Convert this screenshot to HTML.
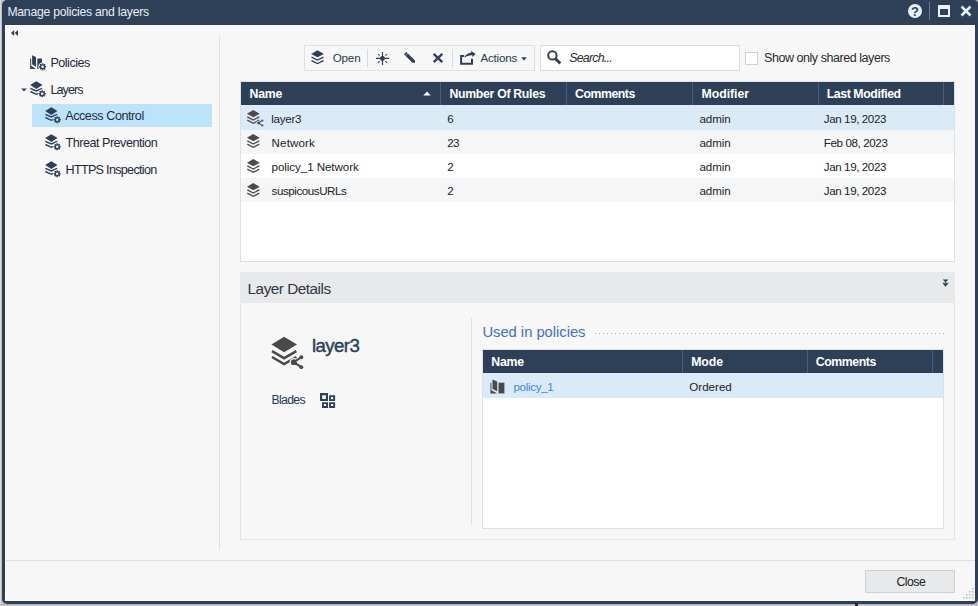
<!DOCTYPE html>
<html lang="en"><head><meta charset="utf-8"><title>Manage policies and layers</title>
<style>
html,body{margin:0;padding:0}
body{width:978px;height:606px;overflow:hidden;background:#c9c9c9;position:relative;font-family:"Liberation Sans", sans-serif}
.a{position:absolute}
.t{position:absolute;white-space:pre;line-height:1}
</style></head><body>
<div class="a" style="left:0;top:0;width:1px;height:606px;background:#dcdcdc"></div>
<div class="a" style="left:1px;top:0;width:1px;height:606px;background:#bfbcbb"></div>
<div class="a" style="left:0;top:604px;width:978px;height:1px;background:#b6b3b1"></div>
<div class="a" style="left:2px;top:0;width:976px;height:604px;background:#2e3f58;border-radius:5px 4px 5px 5px"></div>
<div class="a" style="left:5px;top:25px;width:970px;height:576px;background:#ffffff"></div>
<div class="a" style="left:6px;top:26px;width:969px;height:574px;background:#f7f7f7"></div>
<div class="a" style="left:855px;top:603px;width:3px;height:3px;background:#1e2a3b"></div>
<svg class="a" style="left:900px;top:0" width="78" height="25" viewBox="0 0 78 25"><circle cx="15" cy="11" r="7" fill="#e8f0fb"/><text x="15" y="15.7" text-anchor="middle" font-family='"Liberation Sans", sans-serif' font-size="13" font-weight="700" fill="#2e3f58">?</text><rect x="29" y="2" width="1" height="18" fill="#6f7b8c"/><path d="M38 5 H50 V17 H38 Z M40 9 H48 V15 H40 Z" fill="#e8f0fb" fill-rule="evenodd"/><path d="M61.5 6.5 L70.5 15.5 M70.5 6.5 L61.5 15.5" stroke="#e8f0fb" stroke-width="2.5" fill="none"/></svg>
<svg class="a" style="left:9.8px;top:29.4px" width="10" height="8" viewBox="0 0 10 8"><path d="M1 4 L4.2 1 V7 Z M4.8 4 L8 1 V7 Z" fill="#2e3f58"/></svg>
<div class="a" style="left:32px;top:104px;width:180px;height:22.7px;background:#bde3fb"></div>
<svg style="position:absolute;left:29.8px;top:54.6px" width="17" height="16" viewBox="0 0 17 16"><path d="M0.15 3.5 L1.15 3.5 L1.15 10.8 L5.3 13.4 L5.3 14.0 L0.15 14.0 Z" fill="#2e3f58"/><path d="M2.1 0.3 L6.0 2.1 L6.0 11.8 L2.1 9.35 Z" fill="#2e3f58"/><path d="M7.3 3.5 L12.0 3.5 L12.0 14.0 L7.3 14.0 Z" fill="#2e3f58"/><circle cx="12.6" cy="11.8" r="4.30" fill="#f7f7f7"/><line x1="14.38" y1="11.80" x2="16.15" y2="11.80" stroke="#2e3f58" stroke-width="1.42"/><line x1="13.86" y1="13.06" x2="15.11" y2="14.31" stroke="#2e3f58" stroke-width="1.42"/><line x1="12.60" y1="13.58" x2="12.60" y2="15.35" stroke="#2e3f58" stroke-width="1.42"/><line x1="11.34" y1="13.06" x2="10.09" y2="14.31" stroke="#2e3f58" stroke-width="1.42"/><line x1="10.82" y1="11.80" x2="9.05" y2="11.80" stroke="#2e3f58" stroke-width="1.42"/><line x1="11.34" y1="10.54" x2="10.09" y2="9.29" stroke="#2e3f58" stroke-width="1.42"/><line x1="12.60" y1="10.03" x2="12.60" y2="8.25" stroke="#2e3f58" stroke-width="1.42"/><line x1="13.86" y1="10.54" x2="15.11" y2="9.29" stroke="#2e3f58" stroke-width="1.42"/><circle cx="12.6" cy="11.8" r="2.66" fill="#2e3f58"/><circle cx="12.6" cy="11.8" r="1.28" fill="#f7f7f7"/></svg>
<svg class="a" style="left:20.5px;top:87.5px" width="6" height="4" viewBox="0 0 6 4"><path d="M0.2 0.4 H5.8 L3 3.6 Z" fill="#2e3f58"/></svg>
<svg style="position:absolute;left:30.2px;top:80.6px" width="17" height="17" viewBox="0 0 17 17"><path d="M6.3 0.3 L12.5 4.1 L6.3 8.1 L0.2 4.1 Z" fill="#2e3f58"/><path d="M0.4 7.3 L6.3 10.0 L12.2 7.3" fill="none" stroke="#2e3f58" stroke-width="1.4"/><path d="M0.4 10.5 L6.3 13.3 L12.2 10.5" fill="none" stroke="#2e3f58" stroke-width="1.4"/><circle cx="12.2" cy="12.8" r="4.30" fill="#f7f7f7"/><line x1="13.97" y1="12.80" x2="15.75" y2="12.80" stroke="#2e3f58" stroke-width="1.42"/><line x1="13.46" y1="14.06" x2="14.71" y2="15.31" stroke="#2e3f58" stroke-width="1.42"/><line x1="12.20" y1="14.58" x2="12.20" y2="16.35" stroke="#2e3f58" stroke-width="1.42"/><line x1="10.94" y1="14.06" x2="9.69" y2="15.31" stroke="#2e3f58" stroke-width="1.42"/><line x1="10.42" y1="12.80" x2="8.65" y2="12.80" stroke="#2e3f58" stroke-width="1.42"/><line x1="10.94" y1="11.54" x2="9.69" y2="10.29" stroke="#2e3f58" stroke-width="1.42"/><line x1="12.20" y1="11.03" x2="12.20" y2="9.25" stroke="#2e3f58" stroke-width="1.42"/><line x1="13.46" y1="11.54" x2="14.71" y2="10.29" stroke="#2e3f58" stroke-width="1.42"/><circle cx="12.2" cy="12.8" r="2.66" fill="#2e3f58"/><circle cx="12.2" cy="12.8" r="1.28" fill="#f7f7f7"/></svg>
<svg style="position:absolute;left:45.2px;top:106.6px" width="17" height="17" viewBox="0 0 17 17"><path d="M6.3 0.3 L12.5 4.1 L6.3 8.1 L0.2 4.1 Z" fill="#2e3f58"/><path d="M0.4 7.3 L6.3 10.0 L12.2 7.3" fill="none" stroke="#2e3f58" stroke-width="1.4"/><path d="M0.4 10.5 L6.3 13.3 L12.2 10.5" fill="none" stroke="#2e3f58" stroke-width="1.4"/><circle cx="12.2" cy="12.8" r="4.30" fill="#bde3fb"/><line x1="13.97" y1="12.80" x2="15.75" y2="12.80" stroke="#2e3f58" stroke-width="1.42"/><line x1="13.46" y1="14.06" x2="14.71" y2="15.31" stroke="#2e3f58" stroke-width="1.42"/><line x1="12.20" y1="14.58" x2="12.20" y2="16.35" stroke="#2e3f58" stroke-width="1.42"/><line x1="10.94" y1="14.06" x2="9.69" y2="15.31" stroke="#2e3f58" stroke-width="1.42"/><line x1="10.42" y1="12.80" x2="8.65" y2="12.80" stroke="#2e3f58" stroke-width="1.42"/><line x1="10.94" y1="11.54" x2="9.69" y2="10.29" stroke="#2e3f58" stroke-width="1.42"/><line x1="12.20" y1="11.03" x2="12.20" y2="9.25" stroke="#2e3f58" stroke-width="1.42"/><line x1="13.46" y1="11.54" x2="14.71" y2="10.29" stroke="#2e3f58" stroke-width="1.42"/><circle cx="12.2" cy="12.8" r="2.66" fill="#2e3f58"/><circle cx="12.2" cy="12.8" r="1.28" fill="#bde3fb"/></svg>
<svg style="position:absolute;left:45.2px;top:133.6px" width="17" height="17" viewBox="0 0 17 17"><path d="M6.3 0.3 L12.5 4.1 L6.3 8.1 L0.2 4.1 Z" fill="#2e3f58"/><path d="M0.4 7.3 L6.3 10.0 L12.2 7.3" fill="none" stroke="#2e3f58" stroke-width="1.4"/><path d="M0.4 10.5 L6.3 13.3 L12.2 10.5" fill="none" stroke="#2e3f58" stroke-width="1.4"/><circle cx="12.2" cy="12.8" r="4.30" fill="#f7f7f7"/><line x1="13.97" y1="12.80" x2="15.75" y2="12.80" stroke="#2e3f58" stroke-width="1.42"/><line x1="13.46" y1="14.06" x2="14.71" y2="15.31" stroke="#2e3f58" stroke-width="1.42"/><line x1="12.20" y1="14.58" x2="12.20" y2="16.35" stroke="#2e3f58" stroke-width="1.42"/><line x1="10.94" y1="14.06" x2="9.69" y2="15.31" stroke="#2e3f58" stroke-width="1.42"/><line x1="10.42" y1="12.80" x2="8.65" y2="12.80" stroke="#2e3f58" stroke-width="1.42"/><line x1="10.94" y1="11.54" x2="9.69" y2="10.29" stroke="#2e3f58" stroke-width="1.42"/><line x1="12.20" y1="11.03" x2="12.20" y2="9.25" stroke="#2e3f58" stroke-width="1.42"/><line x1="13.46" y1="11.54" x2="14.71" y2="10.29" stroke="#2e3f58" stroke-width="1.42"/><circle cx="12.2" cy="12.8" r="2.66" fill="#2e3f58"/><circle cx="12.2" cy="12.8" r="1.28" fill="#f7f7f7"/></svg>
<svg style="position:absolute;left:45.2px;top:160.6px" width="17" height="17" viewBox="0 0 17 17"><path d="M6.3 0.3 L12.5 4.1 L6.3 8.1 L0.2 4.1 Z" fill="#2e3f58"/><path d="M0.4 7.3 L6.3 10.0 L12.2 7.3" fill="none" stroke="#2e3f58" stroke-width="1.4"/><path d="M0.4 10.5 L6.3 13.3 L12.2 10.5" fill="none" stroke="#2e3f58" stroke-width="1.4"/><circle cx="12.2" cy="12.8" r="4.30" fill="#f7f7f7"/><line x1="13.97" y1="12.80" x2="15.75" y2="12.80" stroke="#2e3f58" stroke-width="1.42"/><line x1="13.46" y1="14.06" x2="14.71" y2="15.31" stroke="#2e3f58" stroke-width="1.42"/><line x1="12.20" y1="14.58" x2="12.20" y2="16.35" stroke="#2e3f58" stroke-width="1.42"/><line x1="10.94" y1="14.06" x2="9.69" y2="15.31" stroke="#2e3f58" stroke-width="1.42"/><line x1="10.42" y1="12.80" x2="8.65" y2="12.80" stroke="#2e3f58" stroke-width="1.42"/><line x1="10.94" y1="11.54" x2="9.69" y2="10.29" stroke="#2e3f58" stroke-width="1.42"/><line x1="12.20" y1="11.03" x2="12.20" y2="9.25" stroke="#2e3f58" stroke-width="1.42"/><line x1="13.46" y1="11.54" x2="14.71" y2="10.29" stroke="#2e3f58" stroke-width="1.42"/><circle cx="12.2" cy="12.8" r="2.66" fill="#2e3f58"/><circle cx="12.2" cy="12.8" r="1.28" fill="#f7f7f7"/></svg>
<div class="a" style="left:218.5px;top:35px;width:1px;height:515px;background:#dde1e7"></div>
<div class="a" style="left:6px;top:559.5px;width:969px;height:1px;background:#dde1e7"></div>
<div class="a" style="left:304px;top:45px;width:231px;height:26px;box-sizing:border-box;border:1px solid #dde1e6;background:#f7f7f7"></div>
<svg class="a" style="left:311px;top:49.6px" width="14" height="15" viewBox="0 0 14 15"><path d="M6.5 0.3 L12.9 3.9 L6.5 7.3 L0.2 3.9 Z" fill="#2e3f58"/><path d="M0.5 7.2 L6.5 10.0 L12.5 7.2" fill="none" stroke="#2e3f58" stroke-width="1.35"/><path d="M0.5 10.6 L6.5 13.5 L12.5 10.6" fill="none" stroke="#2e3f58" stroke-width="1.35"/></svg>
<div class="a" style="left:367px;top:49.2px;width:1px;height:17.5px;background:#d5dae1"></div>
<div class="a" style="left:452.2px;top:49.2px;width:1px;height:17.5px;background:#d5dae1"></div>
<svg class="a" style="left:375px;top:51px" width="15" height="15" viewBox="0 0 15 15"><path d="M7.5 0.9 V14.0 M0.9 7.4 H14.2" stroke="#2e3f58" stroke-width="1.15" fill="none"/><path d="M7.5 4.1 Q8.2 6.7 10.8 7.4 Q8.2 8.1 7.5 10.7 Q6.8 8.1 4.2 7.4 Q6.8 6.7 7.5 4.1 Z" fill="#2e3f58"/><circle cx="7.5" cy="7.4" r="2.3" fill="#2e3f58"/><path d="M3.0 3.0 L4.6 4.6 M12.0 3.0 L10.4 4.6 M3.0 11.8 L4.6 10.2 M12.0 11.8 L10.4 10.2" stroke="#2e3f58" stroke-width="1.05" fill="none"/></svg>
<svg class="a" style="left:403px;top:51px" width="14" height="14" viewBox="0 0 14 14"><path d="M3.4 0.9 L12.0 9.6 L12.0 11.8 L9.5 11.8 L0.9 3.2 Z" fill="#2e3f58"/><path d="M2.5 4.6 L4.9 2.3" stroke="#f7f7f7" stroke-width="0.6" fill="none"/></svg>
<svg class="a" style="left:432px;top:52px" width="13" height="12" viewBox="0 0 13 12"><path d="M1.7 1.9 L10.3 10.1 M10.3 1.9 L1.7 10.1" stroke="#2e3f58" stroke-width="2.3" fill="none"/></svg>
<svg class="a" style="left:459px;top:50px" width="18" height="16" viewBox="0 0 18 16"><path d="M5.2 6.0 H2.1 V13.8 H13.0 V8.7" fill="none" stroke="#2e3f58" stroke-width="2"/><path d="M5.2 8.0 C6.3 4.7 8.9 2.9 12.2 2.8 L12.1 1.0 L16.5 3.8 L13.7 6.9 L13.2 5.3 C10.4 5.0 7.7 6.0 5.2 8.0 Z" fill="#2e3f58"/></svg>
<svg class="a" style="left:521.3px;top:56.8px" width="6" height="4" viewBox="0 0 6 4"><path d="M0.2 0.3 H5.8 L3 3.4 Z" fill="#2e3f58"/></svg>
<div class="a" style="left:540px;top:45px;width:200px;height:26px;box-sizing:border-box;border:1px solid #d9dce0;background:#ffffff"></div>
<svg class="a" style="left:546px;top:50px" width="17" height="16" viewBox="0 0 17 16"><circle cx="6.4" cy="5.4" r="4.2" fill="none" stroke="#2e3f58" stroke-width="2"/><path d="M9.3 8.4 L14.3 13.5" stroke="#2e3f58" stroke-width="2.9"/></svg>
<div class="a" style="left:745px;top:52px;width:12.6px;height:12.6px;box-sizing:border-box;border:1px solid #cfd2d6;background:#ffffff"></div>
<div class="a" style="left:240px;top:81px;width:715px;height:181px;box-sizing:border-box;border:1px solid #dde1e7;background:#ffffff"></div>
<div class="a" style="left:241px;top:82px;width:713px;height:23px;background:#2e3f58"></div>
<div class="a" style="left:440.3px;top:82px;width:1px;height:23px;background:#4a5d7c"></div>
<div class="a" style="left:566.1px;top:82px;width:1px;height:23px;background:#4a5d7c"></div>
<div class="a" style="left:692.1px;top:82px;width:1px;height:23px;background:#4a5d7c"></div>
<div class="a" style="left:818.2px;top:82px;width:1px;height:23px;background:#4a5d7c"></div>
<div class="a" style="left:943.3px;top:82px;width:1px;height:23px;background:#4a5d7c"></div>
<svg class="a" style="left:422.5px;top:91px" width="8" height="5" viewBox="0 0 8 5"><path d="M0.3 4.6 L4 0.4 L7.7 4.6 Z" fill="#ffffff"/></svg>
<div class="a" style="left:241px;top:105.0px;width:713px;height:24.7px;background:#dbeaf7"></div>
<div class="a" style="left:241px;top:129.7px;width:713px;height:24.2px;background:#f5f6f7"></div>
<div class="a" style="left:241px;top:153.9px;width:713px;height:24.2px;background:#ffffff"></div>
<div class="a" style="left:241px;top:178.0px;width:713px;height:24.1px;background:#f5f6f7"></div>
<svg style="position:absolute;left:247.3px;top:109.7px" width="18" height="18" viewBox="0 0 18 18"><path d="M6.3 0.1 L12.7 3.8 L6.3 7.3 L-0.1 3.8 Z" fill="#4a4a4a"/><path d="M0.3 6.9 L6.3 10.0 L12.3 6.9" fill="none" stroke="#4a4a4a" stroke-width="1.3"/><path d="M0.3 10.2 L6.3 13.3 L12.3 10.2" fill="none" stroke="#4a4a4a" stroke-width="1.3"/><circle cx="11.6" cy="13.0" r="2.21" fill="#dbeaf7"/><path d="M15.47 10.44 L11.60 13.00 L15.47 15.56" fill="none" stroke="#4a4a4a" stroke-width="1.03"/><circle cx="11.6" cy="13.0" r="1.48" fill="#4a4a4a"/><circle cx="15.47" cy="10.44" r="0.99" fill="#4a4a4a"/><circle cx="15.47" cy="15.56" r="0.99" fill="#4a4a4a"/></svg>
<svg style="position:absolute;left:247.3px;top:134.4px" width="18" height="18" viewBox="0 0 18 18"><path d="M6.3 0.1 L12.7 3.8 L6.3 7.3 L-0.1 3.8 Z" fill="#4a4a4a"/><path d="M0.3 6.9 L6.3 10.0 L12.3 6.9" fill="none" stroke="#4a4a4a" stroke-width="1.3"/><path d="M0.3 10.2 L6.3 13.3 L12.3 10.2" fill="none" stroke="#4a4a4a" stroke-width="1.3"/></svg>
<svg style="position:absolute;left:247.3px;top:158.6px" width="18" height="18" viewBox="0 0 18 18"><path d="M6.3 0.1 L12.7 3.8 L6.3 7.3 L-0.1 3.8 Z" fill="#4a4a4a"/><path d="M0.3 6.9 L6.3 10.0 L12.3 6.9" fill="none" stroke="#4a4a4a" stroke-width="1.3"/><path d="M0.3 10.2 L6.3 13.3 L12.3 10.2" fill="none" stroke="#4a4a4a" stroke-width="1.3"/></svg>
<svg style="position:absolute;left:247.3px;top:182.7px" width="18" height="18" viewBox="0 0 18 18"><path d="M6.3 0.1 L12.7 3.8 L6.3 7.3 L-0.1 3.8 Z" fill="#4a4a4a"/><path d="M0.3 6.9 L6.3 10.0 L12.3 6.9" fill="none" stroke="#4a4a4a" stroke-width="1.3"/><path d="M0.3 10.2 L6.3 13.3 L12.3 10.2" fill="none" stroke="#4a4a4a" stroke-width="1.3"/></svg>
<div class="a" style="left:240px;top:272px;width:715px;height:268px;box-sizing:border-box;border:1px solid #e3e4e7;background:#f7f7f7"></div>
<div class="a" style="left:240px;top:272px;width:715px;height:30.5px;background:#e8e9eb"></div>
<svg class="a" style="left:942px;top:278.5px" width="7" height="9" viewBox="0 0 7 9"><path d="M0.7 0.4 H6.3 L3.5 3.4 Z M0.7 4.6 H6.3 L3.5 7.7 Z" fill="#2e3f58"/><rect x="0.7" y="3.7" width="5.6" height="0.9" fill="#2e3f58"/></svg>
<svg style="position:absolute;left:271px;top:336px" width="34" height="34" viewBox="0 0 34 34"><path d="M13.1 0.8 L26.0 8.6 L13.1 16.2 L0.4 8.6 Z" fill="#4a4a4a"/><path d="M1.0 15.2 L13.1 22.2 L25.4 15.2" fill="none" stroke="#4a4a4a" stroke-width="2.5"/><path d="M1.0 21.0 L13.1 28.0 L25.4 21.0" fill="none" stroke="#4a4a4a" stroke-width="2.5"/><circle cx="22.8" cy="26.2" r="4.29" fill="#f7f7f7"/><path d="M30.32 21.21 L22.80 26.20 L30.32 31.19" fill="none" stroke="#4a4a4a" stroke-width="2.01"/><circle cx="22.8" cy="26.2" r="2.89" fill="#4a4a4a"/><circle cx="30.32" cy="21.21" r="1.93" fill="#4a4a4a"/><circle cx="30.32" cy="31.19" r="1.93" fill="#4a4a4a"/></svg>
<svg class="a" style="left:320px;top:393px" width="16" height="16" viewBox="0 0 16 16"><path d="M0 0 H8 V8.1 H0 Z M2.2 2.2 V5.9 H5.9 V2.2 Z" fill="#2e3f58" fill-rule="evenodd"/><path d="M9.1 2.2 H15.1 V8.1 H9.1 Z M11.0 4.0 V6.2 H13.2 V4.0 Z" fill="#2e3f58" fill-rule="evenodd"/><path d="M2.0 9.2 H8 V14.9 H2.0 Z M3.9 11.0 V13.1 H6.1 V11.0 Z" fill="#2e3f58" fill-rule="evenodd"/><path d="M9.1 9.2 H15.1 V14.9 H9.1 Z M11.0 11.0 V13.1 H13.2 V11.0 Z" fill="#2e3f58" fill-rule="evenodd"/></svg>
<div class="a" style="left:471.3px;top:318px;width:1px;height:206px;background:#dde1e7"></div>
<div class="a" style="left:595px;top:333px;width:349px;height:1px;background:repeating-linear-gradient(90deg,#a9b3c4 0,#a9b3c4 1px,transparent 1px,transparent 4px)"></div>
<div class="a" style="left:482px;top:349px;width:461.6px;height:180px;box-sizing:border-box;border:1px solid #dde1e7;background:#ffffff"></div>
<div class="a" style="left:482.6px;top:349.8px;width:460.4px;height:23.2px;background:#2e3f58"></div>
<div class="a" style="left:682.0px;top:349.8px;width:1px;height:23.2px;background:#4a5d7c"></div>
<div class="a" style="left:807.3px;top:349.8px;width:1px;height:23.2px;background:#4a5d7c"></div>
<div class="a" style="left:932.2px;top:349.8px;width:1px;height:23.2px;background:#4a5d7c"></div>
<div class="a" style="left:482.6px;top:373px;width:460.4px;height:24.6px;background:#dbeaf7"></div>
<svg class="a" style="left:489.6px;top:378.5px" width="15" height="15" viewBox="0 0 15 15"><path d="M0.45 3.7 L1.4 3.7 L1.4 11.2 L6.5 13.9 L6.5 14.4 L0.45 14.4 Z" fill="#494949"/><path d="M2.5 0.4 L7.2 2.5 L7.2 12.3 L2.5 9.8 Z" fill="#494949"/><path d="M8.5 3.7 L14.4 3.7 L14.4 14.4 L8.5 14.4 Z" fill="#494949"/></svg>
<div class="a" style="left:865px;top:570px;width:90px;height:23px;box-sizing:border-box;border:1px solid #cdd0d6;background:#e8e9eb"></div>
<svg class="a" style="left:962.6px;top:588px" width="11" height="11" viewBox="0 0 11 11"><rect x="9" y="0" width="1.4" height="1.6" fill="#aab6cc"/><rect x="6" y="3" width="1.4" height="1.6" fill="#aab6cc"/><rect x="9" y="3" width="1.4" height="1.6" fill="#aab6cc"/><rect x="3" y="6" width="1.4" height="1.6" fill="#aab6cc"/><rect x="6" y="6" width="1.4" height="1.6" fill="#aab6cc"/><rect x="9" y="6" width="1.4" height="1.6" fill="#aab6cc"/><rect x="0" y="9" width="1.4" height="1.6" fill="#aab6cc"/><rect x="3" y="9" width="1.4" height="1.6" fill="#aab6cc"/><rect x="6" y="9" width="1.4" height="1.6" fill="#aab6cc"/><rect x="9" y="9" width="1.4" height="1.6" fill="#aab6cc"/></svg>
<div class="t" style="left:7.40px;top:6px;font-size:12.2px;font-weight:400;font-style:normal;color:#e6effb;letter-spacing:-0.239px">Manage policies and layers</div>
<div class="t" style="left:50.50px;top:57px;font-size:12.6px;font-weight:400;font-style:normal;color:#1f2a3a;letter-spacing:-0.526px">Policies</div>
<div class="t" style="left:50.50px;top:84px;font-size:12.6px;font-weight:400;font-style:normal;color:#1f2a3a;letter-spacing:-0.952px">Layers</div>
<div class="t" style="left:65.20px;top:110px;font-size:12.6px;font-weight:400;font-style:normal;color:#1f2a3a;letter-spacing:-0.436px">Access Control</div>
<div class="t" style="left:65.50px;top:137px;font-size:12.6px;font-weight:400;font-style:normal;color:#1f2a3a;letter-spacing:-0.489px">Threat Prevention</div>
<div class="t" style="left:65.50px;top:164px;font-size:12.6px;font-weight:400;font-style:normal;color:#1f2a3a;letter-spacing:-0.700px">HTTPS Inspection</div>
<div class="t" style="left:332.70px;top:52px;font-size:11.6px;font-weight:400;font-style:normal;color:#2b3950;letter-spacing:-0.144px">Open</div>
<div class="t" style="left:480.40px;top:52px;font-size:11.6px;font-weight:400;font-style:normal;color:#2b3950;letter-spacing:-0.176px">Actions</div>
<div class="t" style="left:569.20px;top:52px;font-size:12.4px;font-weight:400;font-style:italic;color:#2a2a2a;letter-spacing:-0.766px">Search...</div>
<div class="t" style="left:764.00px;top:52px;font-size:12.5px;font-weight:400;font-style:normal;color:#2a2a2a;letter-spacing:-0.447px">Show only shared layers</div>
<div class="t" style="left:249.60px;top:88px;font-size:12.3px;font-weight:700;font-style:normal;color:#ffffff;letter-spacing:-0.275px">Name</div>
<div class="t" style="left:449.50px;top:88px;font-size:12.3px;font-weight:700;font-style:normal;color:#ffffff;letter-spacing:-0.317px">Number Of Rules</div>
<div class="t" style="left:575.10px;top:88px;font-size:12.3px;font-weight:700;font-style:normal;color:#ffffff;letter-spacing:-0.481px">Comments</div>
<div class="t" style="left:701.50px;top:88px;font-size:12.3px;font-weight:700;font-style:normal;color:#ffffff;letter-spacing:-0.041px">Modifier</div>
<div class="t" style="left:826.70px;top:88px;font-size:12.3px;font-weight:700;font-style:normal;color:#ffffff;letter-spacing:-0.404px">Last Modified</div>
<div class="t" style="left:271.20px;top:113px;font-size:11.6px;font-weight:400;font-style:normal;color:#222;letter-spacing:-0.263px">layer3</div>
<div class="t" style="left:271.60px;top:137px;font-size:11.6px;font-weight:400;font-style:normal;color:#222;letter-spacing:0.124px">Network</div>
<div class="t" style="left:271.60px;top:161px;font-size:11.6px;font-weight:400;font-style:normal;color:#222;letter-spacing:-0.074px">policy_1 Network</div>
<div class="t" style="left:271.60px;top:185px;font-size:11.6px;font-weight:400;font-style:normal;color:#222;letter-spacing:-0.442px">suspicousURLs</div>
<div class="t" style="left:447.30px;top:113px;font-size:11.6px;font-weight:400;font-style:normal;color:#222;letter-spacing:-0.553px">6</div>
<div class="t" style="left:447.30px;top:137px;font-size:11.6px;font-weight:400;font-style:normal;color:#222;letter-spacing:-0.703px">23</div>
<div class="t" style="left:447.30px;top:161px;font-size:11.6px;font-weight:400;font-style:normal;color:#222;letter-spacing:-0.553px">2</div>
<div class="t" style="left:447.30px;top:185px;font-size:11.6px;font-weight:400;font-style:normal;color:#222;letter-spacing:-0.553px">2</div>
<div class="t" style="left:699.50px;top:113px;font-size:11.6px;font-weight:400;font-style:normal;color:#222;letter-spacing:-0.096px">admin</div>
<div class="t" style="left:699.50px;top:137px;font-size:11.6px;font-weight:400;font-style:normal;color:#222;letter-spacing:-0.096px">admin</div>
<div class="t" style="left:699.50px;top:161px;font-size:11.6px;font-weight:400;font-style:normal;color:#222;letter-spacing:-0.096px">admin</div>
<div class="t" style="left:699.50px;top:185px;font-size:11.6px;font-weight:400;font-style:normal;color:#222;letter-spacing:-0.096px">admin</div>
<div class="t" style="left:823.80px;top:113px;font-size:11.6px;font-weight:400;font-style:normal;color:#222;letter-spacing:-0.404px">Jan 19, 2023</div>
<div class="t" style="left:823.80px;top:137px;font-size:11.6px;font-weight:400;font-style:normal;color:#222;letter-spacing:-0.387px">Feb 08, 2023</div>
<div class="t" style="left:823.80px;top:161px;font-size:11.6px;font-weight:400;font-style:normal;color:#222;letter-spacing:-0.404px">Jan 19, 2023</div>
<div class="t" style="left:823.80px;top:185px;font-size:11.6px;font-weight:400;font-style:normal;color:#222;letter-spacing:-0.404px">Jan 19, 2023</div>
<div class="t" style="left:247.60px;top:281px;font-size:15.3px;font-weight:400;font-style:normal;color:#30353e;letter-spacing:-0.483px">Layer Details</div>
<div class="t" style="left:311.90px;top:337px;font-size:18.7px;font-weight:400;font-style:normal;color:#2e3f58;letter-spacing:-0.584px;-webkit-text-stroke:0.45px #2e3f58">layer3</div>
<div class="t" style="left:271.50px;top:394px;font-size:12.3px;font-weight:400;font-style:normal;color:#2b3950;letter-spacing:-0.702px">Blades</div>
<div class="t" style="left:482.40px;top:325px;font-size:14.8px;font-weight:400;font-style:normal;color:#4272bc;letter-spacing:-0.034px">Used in policies</div>
<div class="t" style="left:491.30px;top:356px;font-size:12.3px;font-weight:700;font-style:normal;color:#ffffff;letter-spacing:-0.200px">Name</div>
<div class="t" style="left:691.20px;top:356px;font-size:12.3px;font-weight:700;font-style:normal;color:#ffffff;letter-spacing:-0.102px">Mode</div>
<div class="t" style="left:815.70px;top:356px;font-size:12.3px;font-weight:700;font-style:normal;color:#ffffff;letter-spacing:-0.406px">Comments</div>
<div class="t" style="left:513.40px;top:381px;font-size:11.6px;font-weight:400;font-style:normal;color:#4086de;letter-spacing:-0.318px">policy_1</div>
<div class="t" style="left:689.30px;top:381px;font-size:11.6px;font-weight:400;font-style:normal;color:#222;letter-spacing:-0.004px">Ordered</div>
<div class="t" style="left:896.50px;top:576px;font-size:12.3px;font-weight:400;font-style:normal;color:#222;letter-spacing:-0.531px">Close</div>
</body></html>
